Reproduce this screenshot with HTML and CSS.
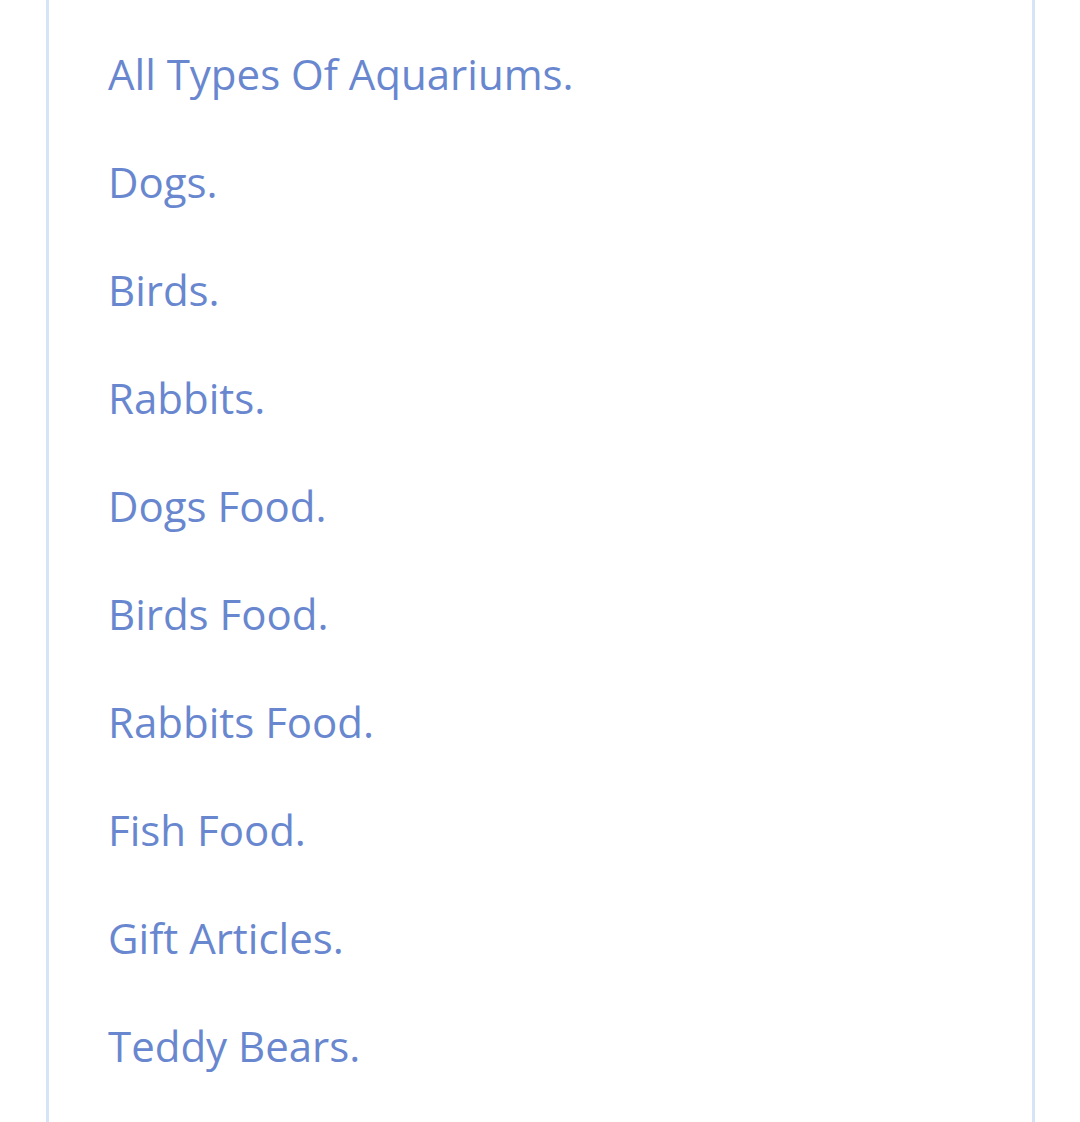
FILE: index.html
```html
<!DOCTYPE html>
<html lang="en">
<head>
	<meta charset="UTF-8">
	<title>Categories</title>
	<link rel="stylesheet" href="styles.css">
</head>
<body>
	<div class="catBox">
		<ul class="catList">
			<li>All Types Of Aquariums.</li>
			<li>Dogs.</li>
			<li>Birds.</li>
			<li>Rabbits.</li>
			<li>Dogs Food.</li>
			<li>Birds Food.</li>
			<li>Rabbits Food.</li>
			<li>Fish Food.</li>
			<li>Gift Articles.</li>
			<li>Teddy Bears.</li>
		</ul>
	</div>
</body>
</html>
```

FILE: styles.css
```css
*{
	margin: 0;
	padding: 0;
}
body{
	background-color: #fff;
	font-family: "Open Sans", "Noto Sans", sans-serif;
	overflow: hidden;
}
.catBox{
	width: 983px;
	margin: -11px 0 0 46px;
	border: 3px solid #d6e4f8;
	border-radius: 12px;
	padding: 28px 0 40px 0;
}
.catList li{
	list-style: none;
	padding-left: 59px;
	height: 108px;
	line-height: 108px;
	font-size: 42px;
	color: #6987cf;
}
```
